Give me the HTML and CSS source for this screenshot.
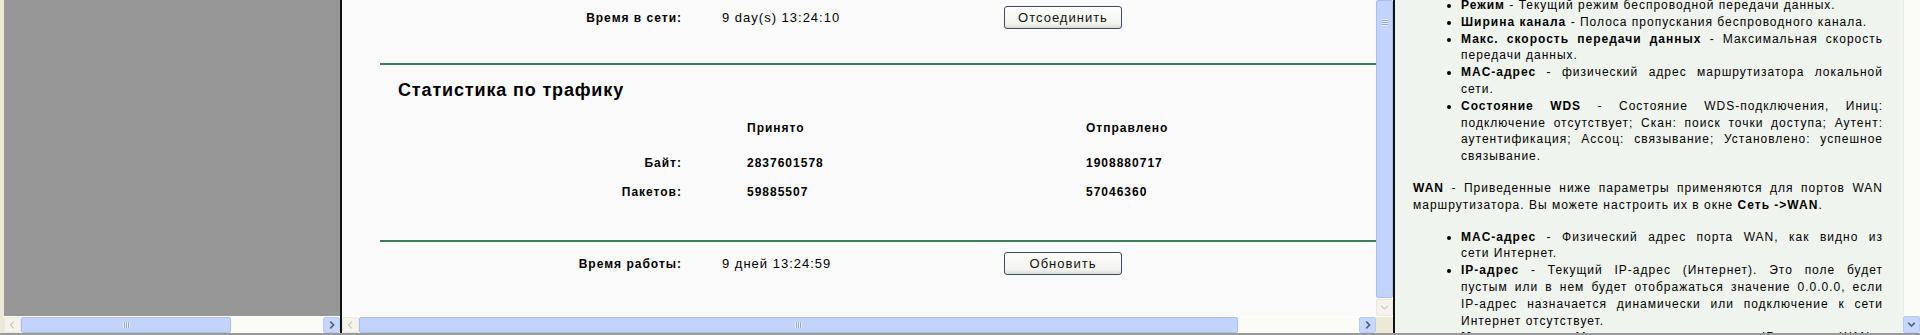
FILE: index.html
```html
<!DOCTYPE html>
<html lang="ru">
<head>
  <meta charset="UTF-8" />
  <title>Состояние</title>
  <link rel="stylesheet" href="styles.css">
</head>
<body>
  <div class="window">

    <!-- левый фрейм (меню, пустой) -->
    <div class="frame frame-nav">
      <div class="nav-view"></div>
      <div class="hbar">
        <div class="sb-btn off"><svg viewBox="0 0 17 17"><path d="M10 4.5 6 8.5l4 4" /></svg></div>
        <div class="sb-thumb thumb-nav"><span class="grip"></span></div>
        <div class="sb-track"></div>
        <div class="sb-btn"><svg viewBox="0 0 17 17"><path d="M7 4.5l4 4-4 4" /></svg></div>
      </div>
    </div>

    <!-- основной фрейм -->
    <div class="frame frame-main">
      <div class="main-row">
        <div class="main-view">
          <div class="status">
            <div class="row">
              <span class="label">Время в сети:</span>
              <span class="value">9 day(s) 13:24:10</span>
              <button class="btn">Отсоединить</button>
            </div>

            <hr class="sep sep-top">

            <h3 class="title">Статистика по трафику</h3>
            <div class="stats">
              <span></span><b>Принято</b><b>Отправлено</b>
              <span class="label">Байт:</span><b>2837601578</b><b>1908880717</b>
              <span class="label">Пакетов:</span><b>59885507</b><b>57046360</b>
            </div>

            <hr class="sep sep-bottom">

            <div class="row">
              <span class="label">Время работы:</span>
              <span class="value">9 дней 13:24:59</span>
              <button class="btn">Обновить</button>
            </div>
          </div>
        </div>
        <div class="vbar">
          <div class="sb-thumb-v"><span class="grip-v"></span></div>
          <div class="sb-btn off"><svg viewBox="0 0 17 17"><path d="M4.5 7l4 4 4-4" /></svg></div>
        </div>
      </div>
      <div class="hbar">
        <div class="sb-btn off"><svg viewBox="0 0 17 17"><path d="M10 4.5 6 8.5l4 4" /></svg></div>
        <div class="sb-thumb thumb-main"><span class="grip"></span></div>
        <div class="sb-track"></div>
        <div class="sb-btn"><svg viewBox="0 0 17 17"><path d="M7 4.5l4 4-4 4" /></svg></div>
        <div class="corner"></div>
      </div>
    </div>

    <!-- справка -->
    <div class="frame frame-help">
      <div class="help-view">
        <ul class="help-list first">
          <li><b>Режим</b> - Текущий режим беспроводной передачи данных.</li>
          <li><b>Ширина канала</b> - Полоса пропускания беспроводного канала.</li>
          <li><b>Макс. скорость передачи данных</b> - Максимальная скорость передачи данных.</li>
          <li><b>MAC-адрес</b> - физический адрес маршрутизатора локальной сети.</li>
          <li><b>Состояние WDS</b> - Состояние WDS-подключения, Иниц: подключение отсутствует; Скан: поиск точки доступа; Аутент: аутентификация; Ассоц: связывание; Установлено: успешное связывание.</li>
        </ul>
        <p><b>WAN</b> - Приведенные ниже параметры применяются для портов WAN маршрутизатора. Вы можете настроить их в окне <b>Сеть -&gt;WAN</b>.</p>
        <ul class="help-list">
          <li><b>MAC-адрес</b> - Физический адрес порта WAN, как видно из сети&nbsp;Интернет.</li>
          <li><b>IP-адрес</b> - Текущий IP-адрес (Интернет). Это поле будет пустым&nbsp;или в нем будет отображаться значение 0.0.0.0, если IP-адрес&nbsp;назначается динамически или подключение к сети Интернет&nbsp;отсутствует.</li>
          <li><b>Маска подсети</b> - Маска подсети, связанная с IP-адресом WAN.</li>
        </ul>
      </div>
      <div class="vbar vbar-help">
        <div class="sb-track-v"></div>
        <div class="sb-btn"><svg viewBox="0 0 17 17"><path d="M4.5 7l4 4 4-4" /></svg></div>
      </div>
    </div>

  </div>
</body>
</html>
```

FILE: styles.css
```css
html, body {
  margin: 0;
  height: 335px;
  overflow: hidden;
}
body {
  background: #ece9d8;
  font-family: "Liberation Sans", Arial, sans-serif;
  font-size: 12px;
  color: #000;
}
.window {
  display: flex;
  height: 333px;
  padding-left: 4px;
  border-bottom: 2px solid #9b9b9b;
}
.frame {
  display: flex;
  flex-direction: column;
  border-right: 2px solid #111;
  overflow: hidden;
}
.frame-nav { width: 336px; }
.frame-main { width: 1051px; }
.frame-help { flex: 1; flex-direction: row; border-right: 0; }

.nav-view {
  flex: 1;
  background: #979797;
}

/* scrollbars */
.hbar {
  display: flex;
  height: 16px;
  border-top: 1px solid #fff;
  background: #fbfbf8;
}
.vbar {
  display: flex;
  flex-direction: column;
  width: 17px;
  background: #fbfbf8;
}
.sb-btn {
  width: 17px;
  height: 16px;
  flex-shrink: 0;
  box-sizing: border-box;
  border: 1px solid #b7c9f4;
  border-radius: 2px;
  background: #c6d6fc;
}
.sb-btn svg {
  display: block;
  width: 15px;
  height: 14px;
  fill: none;
  stroke: #4d6185;
  stroke-width: 2;
}
.sb-btn.off {
  border-color: #ebe9dd;
  background: #f4f3ec;
}
.sb-btn.off svg {
  stroke: #c9c6b6;
  stroke-width: 1.3;
}
.sb-thumb {
  display: flex;
  align-items: center;
  justify-content: center;
  box-sizing: border-box;
  border: 1px solid #a9bff2;
  border-radius: 2px;
  background: #c3d3fc;
}
.thumb-nav { width: 210px; }
.thumb-main { width: 879px; }
.grip {
  width: 7px;
  height: 6px;
  background: repeating-linear-gradient(90deg, #e9efff 0 1px, #8ea6dc 1px 2px);
}
.sb-track { flex: 1; }
.corner {
  width: 17px;
  background: #ece9d8;
}
.sb-thumb-v {
  flex: 1;
  display: flex;
  justify-content: center;
  box-sizing: border-box;
  border: 1px solid #a9bff2;
  border-radius: 2px;
  background: #c3d3fc;
  margin-bottom: 1px;
}
.grip-v {
  width: 6px;
  height: 7px;
  margin-top: 18px;
  background: repeating-linear-gradient(180deg, #e9efff 0 1px, #8ea6dc 1px 2px);
}
.vbar .sb-btn { height: 17px; }

/* main frame */
.main-row {
  flex: 1;
  display: flex;
  min-height: 0;
}
.main-view {
  flex: 1;
  overflow: hidden;
  background: #fafafa;
}
.status {
  width: 1150px;
  margin-left: 38px;
  padding-top: 6px;
  letter-spacing: 1px;
}
.row {
  display: grid;
  grid-template-columns: 342px 282px auto;
  align-items: center;
  height: 23px;
}
.label {
  padding-right: 40px;
  text-align: right;
  font-weight: bold;
}
.value { font-size: 13px; }
.btn {
  width: 118px;
  height: 23px;
  padding: 0;
  border: 1px solid #3b4a63;
  border-radius: 3px;
  background: linear-gradient(#fefefe, #f2f2ee 80%, #dcdcd6);
  font-family: inherit;
  font-size: 13px;
  letter-spacing: 1px;
  color: #111;
}
.sep {
  height: 0;
  margin: 0;
  border: 0;
  border-top: 2px solid #3c7d5c;
}
.sep-top { margin-top: 34px; }
.sep-bottom { margin-top: 38px; margin-bottom: 10px; }
.title {
  margin: 15px 0 0 18px;
  font-size: 18px;
  line-height: 20px;
  letter-spacing: 0.85px;
}
.stats {
  display: grid;
  grid-template-columns: 367px 339px auto;
  grid-template-rows: 35px 29px 20px;
  margin-top: 18px;
  line-height: 20px;
}
.stats .label { padding-right: 65px; }

/* help frame */
.help-view {
  flex: 1;
  overflow: hidden;
  padding: 0 20px 0 18px;
  background: #f0f4ee;
  font-size: 12px;
  line-height: 16.8px;
  letter-spacing: 1px;
  text-align: justify;
}
.help-list {
  margin: 15px 0 0;
  padding-left: 48px;
}
.help-list.first { margin-top: -3px; }
.help-view p { margin: 15px 0 0; }
.vbar-help .sb-track-v {
  flex: 1;
  border-left: 1px solid #eeede5;
}
```
